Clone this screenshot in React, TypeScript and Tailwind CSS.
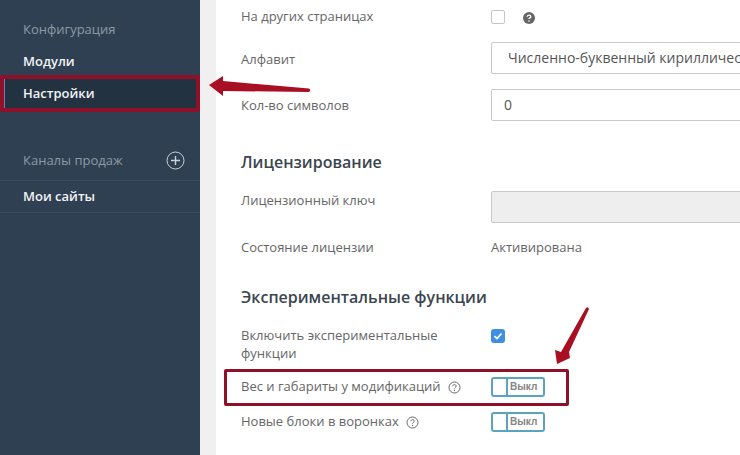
import React from "react";

const font = { fontFamily: '"Open Sans", sans-serif' };

function Toggle() {
  return (
    <div className="flex h-[20px] w-[54px] rounded-[3px] border-2 border-[#5ba3c2] bg-white">
      <div className="w-[15px] border-r-2 border-[#5ba3c2]" />
      <div className="flex-1 pl-[2px] font-['Liberation_Sans',sans-serif] text-[10px] font-bold leading-[16px] text-[#858585]">Выкл</div>
    </div>
  );
}

function Help() {
  return (
    <svg width="13" height="13" viewBox="0 0 13 13" className="ml-[7px] shrink-0">
      <circle cx="6.5" cy="6.5" r="5.5" fill="none" stroke="#666" strokeWidth="1" />
      <path d="M4.8 5.2c0-1 .8-1.6 1.7-1.6s1.7.6 1.7 1.5c0 1.2-1.7 1.3-1.7 2.5" fill="none" stroke="#666" strokeWidth="1" />
      <circle cx="6.5" cy="9.4" r=".7" fill="#666" />
    </svg>
  );
}

function Row({ label, h, children, className = "", labelClass = "" }: { label: React.ReactNode; h: string; children?: React.ReactNode; className?: string; labelClass?: string }) {
  return (
    <div className={`flex items-center ${h} ${className}`}>
      <div className={`flex w-[250px] shrink-0 items-center text-[13px] text-[#666] ${labelClass}`}>{label}</div>
      {children}
    </div>
  );
}

export default function App() {
  return (
    <div className="relative flex h-[455px] w-[740px] overflow-hidden bg-white" style={font}>
      <aside className="w-[200px] shrink-0 bg-[#2f4052] pt-[19px] text-[13px]">
        <div className="flex h-[22px] items-center pl-[23px] text-[#8f99a3]">Конфигурация</div>
        <div className="mt-[10px] flex h-[22px] items-center pl-[23px] font-semibold text-[#f1f3f4]">Модули</div>
        <div className="mt-[5px] ml-[3px] flex h-[30px] items-center border-l-2 border-[#6f7fb5] bg-[#233241] pt-[2px] pl-[18px] font-semibold text-[#f1f3f4]">Настройки</div>
        <div className="mt-[41px] flex h-[32px] items-center justify-between border-b border-[#3a4c5e] pr-[15px] pl-[23px] text-[#8f99a3]">
          <span className="-mt-[8px]">Каналы продаж</span>
          <svg width="19" height="19" viewBox="0 0 19 19" className="-mt-[8px]">
            <circle cx="9.5" cy="9.5" r="8.5" fill="none" stroke="#c9d1d8" strokeWidth="1" />
            <path d="M5 9.5h9M9.5 5v9" stroke="#c9d1d8" strokeWidth="1.4" />
          </svg>
        </div>
        <div className="flex h-[32px] items-center border-b border-[#3a4c5e] pl-[23px] font-semibold text-[#f1f3f4]">Мои сайты</div>
      </aside>
      <div className="w-[16px] shrink-0 bg-[#f0f0f0]" />
      <main className="min-w-0 flex-1 overflow-hidden pl-[25px]">
        <Row label="На других страницах" h="h-[18px]" className="mt-[8px]">
          <div className="h-[14px] w-[14px] rounded-[2px] border border-[#c4c4c4] bg-white" />
          <svg width="12" height="12" viewBox="0 0 12 12" className="mt-[2px] ml-[18px]">
            <circle cx="6" cy="6" r="6" fill="#666" />
            <path d="M4.2 4.8c0-1 .8-1.6 1.8-1.6s1.8.6 1.8 1.5c0 1.2-1.8 1.2-1.8 2.4" fill="none" stroke="#fff" strokeWidth="1.3" />
            <circle cx="6" cy="9" r=".8" fill="#fff" />
          </svg>
        </Row>
        <Row label="Алфавит" h="h-[32px]" className="mt-[16px]" labelClass="mt-[4px]">
          <div className="h-full w-[300px] shrink-0 rounded-[2px] border border-[#c8c8c8] pl-[16px] text-[14px] leading-[30px] whitespace-nowrap text-[#555]">Численно-буквенный кириллический</div>
        </Row>
        <Row label="Кол-во символов" h="h-[32px]" className="mt-[15px]" labelClass="mt-[1px]">
          <div className="h-full w-[300px] shrink-0 rounded-[2px] border border-[#c8c8c8] pl-[12px] text-[14px] leading-[30px] text-[#555]">0</div>
        </Row>
        <h2 className="mt-[29px] text-[16px] leading-[24px] font-semibold text-[#3b4550]">Лицензирование</h2>
        <Row label="Лицензионный ключ" h="h-[32px]" className="mt-[17px]" labelClass="mb-[12px]">
          <div className="h-full w-[300px] shrink-0 rounded-[2px] border border-[#c8c8c8] bg-[#eeeeee]" />
        </Row>
        <Row label="Состояние лицензии" h="h-[20px]" className="mt-[15px]">
          <span className="text-[13px] text-[#666]">Активирована</span>
        </Row>
        <h2 className="mt-[27px] text-[16px] leading-[24px] font-semibold text-[#3b4550]">Экспериментальные функции</h2>
        <div className="mt-[17px] flex h-[36px]">
          <div className="w-[250px] shrink-0 text-[13px] leading-[18px] text-[#666]">Включить экспериментальные<br />функции</div>
          <div className="mt-[3px] flex h-[14px] w-[14px] items-center justify-center rounded-[3px] bg-[#3f8fe0]">
            <svg width="10" height="10" viewBox="0 0 10 10"><path d="M1.5 5.2 4 7.5 8.5 2.5" fill="none" stroke="#fff" strokeWidth="1.8" /></svg>
          </div>
        </div>
        <Row label={<>Вес и габариты у модификаций<Help /></>} h="h-[20px]" className="mt-[15px]"><Toggle /></Row>
        <Row label={<>Новые блоки в воронках<Help /></>} h="h-[20px]" className="mt-[15px]"><Toggle /></Row>
      </main>

      <div className="absolute top-[75px] left-0 h-[37px] w-[200px] rounded-[2px] border-[4px] border-[#8f1029]" />
      <div className="absolute top-[369px] left-[224px] h-[37px] w-[345px] rounded-[2px] border-[3px] border-[#8f1029]" />
      <svg className="absolute top-0 left-0" width="740" height="455" viewBox="0 0 740 455" fill="#a90f22">
        <path d="M209 85 223 76 223 81 309 88.5Q311.500 90.500 309 92L223 91 223 96Z" />
        <path d="M586 308Q588 306 589 309L569 352 570 358 557 364 555 350 561 352Z" />
      </svg>
    </div>
  );
}
